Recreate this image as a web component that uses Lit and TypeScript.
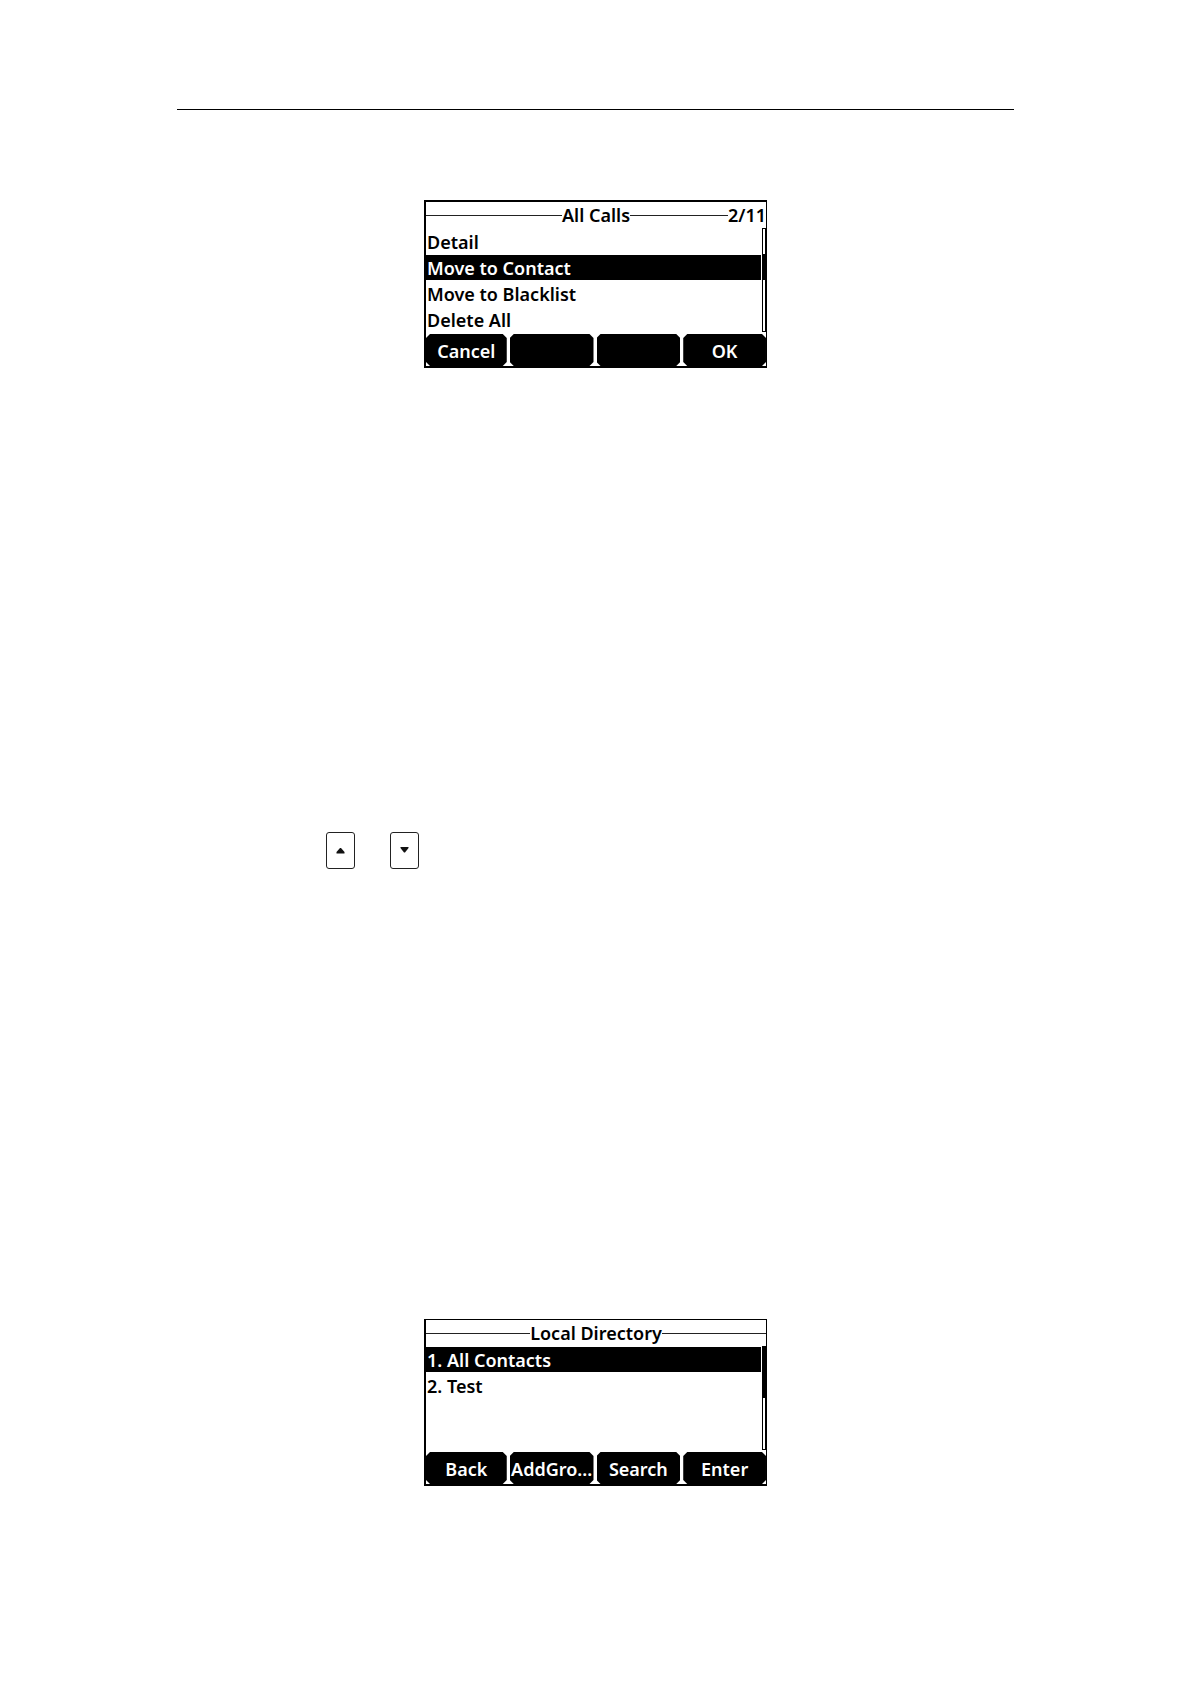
import { LitElement, html, css, svg, nothing } from "lit";
import { customElement, property } from "lit/decorators.js";
import { classMap } from "lit/directives/class-map.js";

/** Monochrome LCD menu: title bar, four-row list, scrollbar and soft keys. */
@customElement("lcd-screen")
class LcdScreen extends LitElement {
  static styles = css`
    :host {
      display: block;
    }
    .screen {
      box-sizing: border-box;
      border: 1px solid #000;
      border-left-width: 2px;
      border-bottom-width: 2px;
      background: #fff;
      color: #000;
      font: 600 18px/26px "Noto Sans", "Open Sans", sans-serif;
    }
    .screen.heavy {
      border-top-width: 2px;
    }
    .title {
      display: flex;
      align-items: center;
      height: 26px;
    }
    .rule {
      flex: 1;
      height: 1px;
      background: #222;
    }
    .side {
      flex: 1;
      display: flex;
      align-items: center;
    }
    h2 {
      margin: 0;
      font: inherit;
    }
    .body {
      display: flex;
      gap: 1px;
      height: 104px;
      margin-bottom: 2px;
    }
    ul {
      flex: 1;
      margin: 0;
      padding: 0;
      list-style: none;
    }
    li {
      height: 26px;
      padding: 1px 0;
      box-sizing: border-box;
    }
    button {
      display: block;
      margin: 0;
      border: 0;
      font: inherit;
      white-space: nowrap;
    }
    .row {
      width: 100%;
      height: 25px;
      padding: 0 1px;
      background: #fff;
      color: #000;
      text-align: left;
    }
    .row.on {
      background: #000;
      color: #fff;
    }
    .bar {
      box-sizing: border-box;
      width: 4px;
      border: 1px solid #000;
    }
    .thumb {
      width: 3px;
      background: #000;
    }
    .keys {
      display: grid;
      grid-template-columns: 81fr 84fr 84fr 83fr;
      gap: 3px;
      height: 32px;
    }
    .key {
      min-width: 0;
      padding: 2px 0 0;
      background: #000;
      color: #fff;
      text-align: center;
      clip-path: polygon(4px 0, calc(100% - 4px) 0, 100% 4px, 100% calc(100% - 4px), calc(100% - 4px) 100%, 4px 100%, 0 calc(100% - 4px), 0 4px);
    }
  `;

  @property() heading = "";
  @property() counter = "";
  @property({ type: Array }) rows: string[] = [];
  @property({ type: Number }) selected = 0;
  @property({ type: Array }) softKeys: string[] = [];
  @property({ type: Array }) thumb: number[] = [0, 0];

  render() {
    return html`
      <section class=${classMap({ screen: true, heavy: this.counter !== "" })}>
        <div class="title">
          <span class="side"><span class="rule"></span></span>
          <h2>${this.heading}</h2>
          <span class="side"><span class="rule"></span>${this.counter || nothing}</span>
        </div>
        <div class="body">
          <ul>
            ${this.rows.map(
              (r, i) => html`<li><button class=${classMap({ row: true, on: i === this.selected })}>${r}</button></li>`
            )}
          </ul>
          <div class="bar">
            <div class="thumb" style="margin-top:${this.thumb[0]}px;height:${this.thumb[1]}px"></div>
          </div>
        </div>
        <div class="keys">
          ${this.softKeys.map((k) => html`<button class="key">${k}</button>`)}
        </div>
      </section>
    `;
  }
}

@customElement("app-root")
class AppRoot extends LitElement {
  static styles = css`
    :host {
      display: block;
      background: #fff;
    }
    main {
      max-width: 837px;
      margin: 0 auto;
      padding: 109px 0 198px;
    }
    hr {
      height: 1px;
      margin: 0 0 90px;
      border: 0;
      background: #000;
    }
    lcd-screen {
      max-width: 343px;
      margin: 0 auto;
    }
    .arrows {
      display: flex;
      gap: 35px;
      margin: 464px 0 450px;
      padding-left: 149px;
    }
    .arrow {
      display: grid;
      place-items: center;
      box-sizing: border-box;
      width: 29px;
      height: 37px;
      padding: 0;
      border: 1px solid #222;
      border-radius: 3px;
      background: #fff;
    }
    svg {
      display: block;
      fill: #111;
    }
  `;

  render() {
    const arrow = (label: string, d: string) => html`
      <button class="arrow" aria-label=${label}>
        <svg width="9" height="7" viewBox="0 0 9 7">${svg`<path d=${d} />`}</svg>
      </button>
    `;
    return html`
      <main>
        <hr />
        <lcd-screen
          heading="All Calls"
          counter="2/11"
          .rows=${["Detail", "Move to Contact", "Move to Blacklist", "Delete All"]}
          .selected=${1}
          .softKeys=${["Cancel", "", "", "OK"]}
          .thumb=${[25, 26]}
        ></lcd-screen>
        <div class="arrows">
          ${arrow("Up", "M4 1h1l3.5 4v1.500h-8v-1.500z")} ${arrow("Down", "M.5 0h8v1l-3.500 4.500h-1l-3.500-4.500z")}
        </div>
        <lcd-screen
          heading="Local Directory"
          .rows=${["1. All Contacts", "2. Test"]}
          .selected=${0}
          .softKeys=${["Back", "AddGro...", "Search", "Enter"]}
          .thumb=${[0, 51]}
        ></lcd-screen>
      </main>
    `;
  }
}
